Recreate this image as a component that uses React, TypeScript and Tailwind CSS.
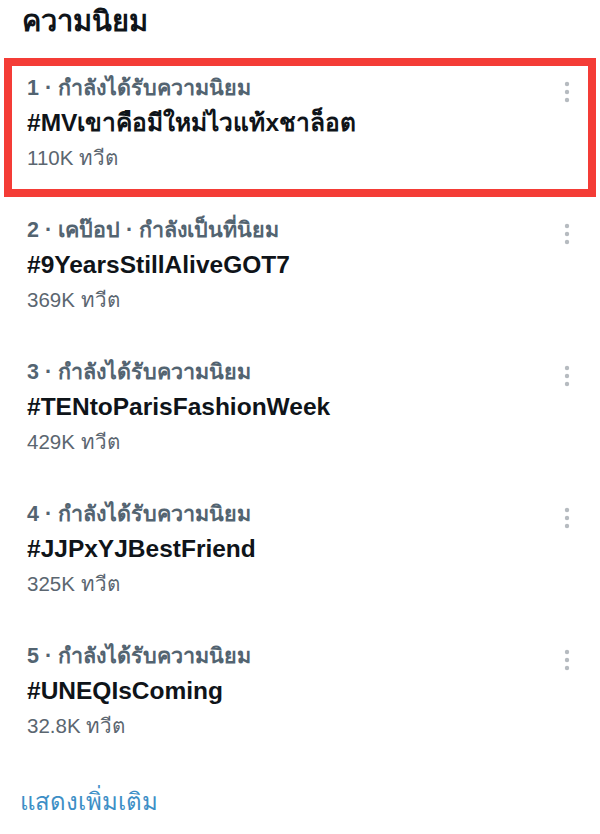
import React from "react";

interface ITrend {
  rank: number;
  meta: string;
  tag: string;
  count: string;
  highlighted?: boolean;
}

const trends: ITrend[] = [
  { rank: 1, meta: "กำลังได้รับความนิยม", tag: "#MVเขาคือมีใหม่ไวแท้xชาล็อต", count: "110K ทวีต", highlighted: true },
  { rank: 2, meta: "เคป๊อป · กำลังเป็นที่นิยม", tag: "#9YearsStillAliveGOT7", count: "369K ทวีต" },
  { rank: 3, meta: "กำลังได้รับความนิยม", tag: "#TENtoParisFashionWeek", count: "429K ทวีต" },
  { rank: 4, meta: "กำลังได้รับความนิยม", tag: "#JJPxYJBestFriend", count: "325K ทวีต" },
  { rank: 5, meta: "กำลังได้รับความนิยม", tag: "#UNEQIsComing", count: "32.8K ทวีต" },
];

const MoreIcon = () => (
  <svg width="8" height="24" viewBox="0 0 8 24" className="text-[#b6bbc0]">
    <circle cx="4" cy="4" r="2.2" fill="currentColor" />
    <circle cx="4" cy="12" r="2.2" fill="currentColor" />
    <circle cx="4" cy="20" r="2.2" fill="currentColor" />
  </svg>
);

const TrendRow = ({ trend }: { trend: ITrend }) => {
  return (
    <div
      className={
        trend.highlighted
          ? "relative mx-[4px] mb-[3px] h-[139px] border-[8px] border-[#f43c36] pl-[15px] pt-[8px]"
          : "relative mx-[4px] mb-[3px] h-[139px] border-[8px] border-transparent pl-[15px] pt-[8px]"
      }
    >
      <p className="text-[21.5px] font-bold leading-[28px] text-[#536471]">
        {trend.rank} · {trend.meta}
      </p>
      <p className="text-[24.5px] font-bold leading-[42px] text-[#0f1419]">
        {trend.tag}
      </p>
      <p className="text-[20.5px] leading-[28px] text-[#5b6670]">{trend.count}</p>
      <div className="absolute right-[17px] top-[14px]">
        <MoreIcon />
      </div>
    </div>
  );
};

export default function App() {
  return (
    <div
      className="h-[834px] w-[600px] overflow-hidden bg-white"
      style={{ fontFamily: '"Liberation Sans", "Noto Sans", sans-serif' }}
    >
      <h1 className="px-[22px] pt-[1px] text-[29px] font-bold leading-[40px] text-[#0f1419]">
        ความนิยม
      </h1>
      <div className="mt-[17px]">
        {trends.map((trend) => (
          <TrendRow key={trend.rank} trend={trend} />
        ))}
      </div>
      <p className="px-[20px] pt-[18px] text-[24px] leading-[32px] text-[#3d8fc6]">
        แสดงเพิ่มเติม
      </p>
    </div>
  );
}
